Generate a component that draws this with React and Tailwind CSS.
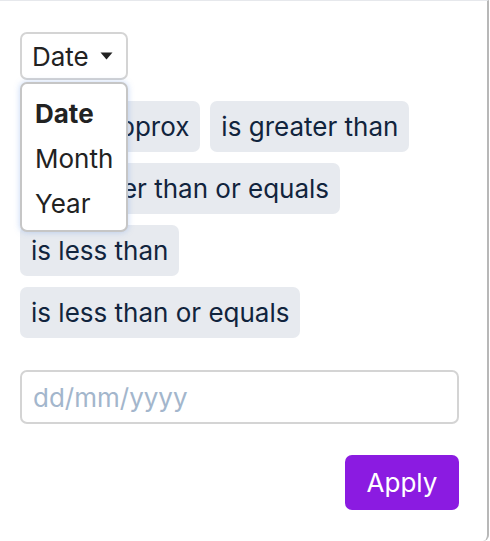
import { useState } from 'react'

const ops = ['is', 'is approx', 'is greater than', 'is greater than or equals', 'is less than', 'is less than or equals']

function Chip({ label, className = '' }) {
  return (
    <button
      className={`h-[51px] px-[11px] rounded-[7px] bg-[#e7eaef] text-[#11243d] text-[26px] leading-none whitespace-nowrap ${className}`}
    >
      {label}
    </button>
  )
}

export default function App() {
  const [unit] = useState('Date')

  return (
    <div className="w-[490px] h-[541px] bg-white" style={{ fontFamily: 'Inter, "Noto Sans", sans-serif' }}>
      <div className="relative h-full w-[489px] border-t border-t-[#e6e8ec] border-r-2 border-r-[#b8b8b8] rounded-br-[6px] pt-[31px] px-[20px]">
        <div className="relative w-fit">
          <button className="h-[48px] w-[108px] pl-[10px] flex items-center gap-[11px] border-2 border-[#d4d4d4] rounded-[7px] text-[26px] text-[#222]">
            {unit}
            <svg width="13" height="8" viewBox="0 0 13 8">
              <path d="M0.5 0.5h12l-6 7z" fill="#222" />
            </svg>
          </button>
          <div className="absolute z-10 left-0 top-[50px] w-[108px] h-[150px] bg-white border-2 border-[#c6c6c6] rounded-[7px] shadow-[0_0_6px_rgba(90,140,230,0.35)] pt-[13px] pl-[13px] flex flex-col gap-[12px] text-[26px] text-[#222] leading-[33px]">
            <span className="font-bold">Date</span>
            <span>Month</span>
            <span>Year</span>
          </div>
        </div>

        <div className="mt-[21px] flex flex-wrap gap-x-[10px] gap-y-[11px] w-[440px]">
          {ops.map((o, i) => (
            <Chip key={o} label={o} className={i === 1 ? 'ml-[-6px]' : ''} />
          ))}
        </div>

        <input
          placeholder="dd/mm/yyyy"
          className="mt-[32px] w-[439px] h-[54px] border-2 border-[#d4d4d4] rounded-[7px] px-[11px] text-[26px] placeholder:text-[#a3b6cc] outline-none"
        />

        <div className="mt-[31px] flex justify-end w-[439px]">
          <button className="h-[55px] w-[114px] rounded-[7px] bg-[#8b1be1] text-white text-[26px]">Apply</button>
        </div>
      </div>
    </div>
  )
}
